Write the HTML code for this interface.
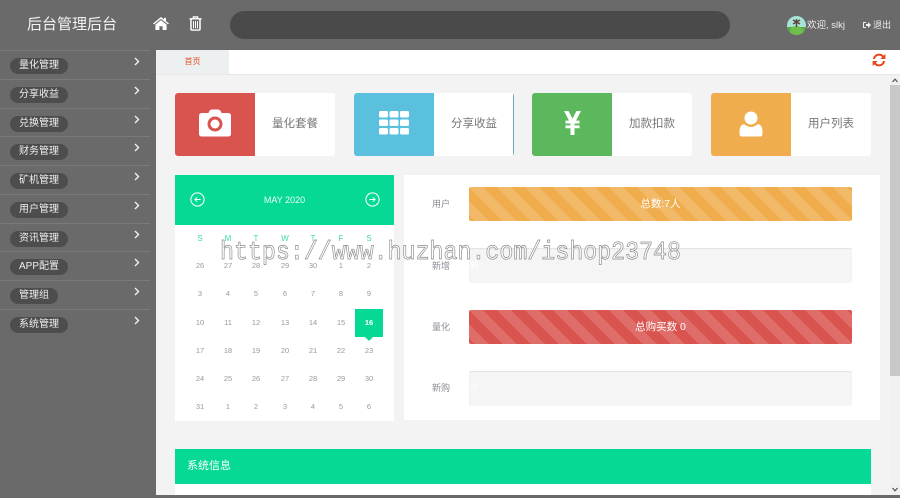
<!DOCTYPE html>
<html lang="zh"><head><meta charset="utf-8"><style>
*{box-sizing:border-box}
html,body{margin:0;padding:0;width:900px;height:498px;overflow:hidden;background:#f3f3f3;font-family:"Liberation Sans","Noto Sans CJK SC",sans-serif}
.a{position:absolute}
.item{position:absolute;left:0;width:150px;height:29px;border-top:1px solid #7a7a7a}
.pill{position:absolute;left:10px;top:7px;height:16px;line-height:16px;background:#4d4d4d;border-radius:8px;color:#eee;font-size:10px;padding:0 9px;white-space:nowrap}
.chev{position:absolute;left:134px;top:6px}
.card{position:absolute;top:93px;width:160px;height:63px;background:#fff;border-radius:3px;overflow:hidden}
.card .ic{position:absolute;left:0;top:0;width:80px;height:63px}
.card .t{position:absolute;left:80px;right:0;top:0;line-height:63px;text-align:center;font-size:11.5px;color:#777}
.cal{position:absolute;font-size:7.5px;color:#999;width:28px;text-align:center;line-height:10px}
.lab{position:absolute;left:432px;font-size:9px;color:#8b8b96;line-height:12px}
.bar{position:absolute;left:469px;width:383px;height:34px;border-radius:2px;text-align:center;line-height:34px;color:#fff;font-size:10.5px}
</style></head><body>
<div class="a" style="left:0;top:0;width:900px;height:50px;background:#6a6a6a"></div>
<div class="a" style="left:0;top:50px;width:156px;height:448px;background:#6a6a6a"></div>
<div class="a" style="left:0;top:495px;width:900px;height:3px;background:#6a6a6a"></div>
<div class="a" style="left:27px;top:14px;font-size:15px;line-height:22px;color:#f2f2f2;white-space:nowrap">后台管理后台</div>
<svg class="a" style="left:153px;top:17px" width="16" height="13" viewBox="0 0 16 14" preserveAspectRatio="none"><path fill="#fff" d="M8 0 L11 2.6 V1 H13 V4.4 L16 7 L15 8 L8 2 L1 8 L0 7 Z M8 3.4 L13.6 8.2 V14 H9.6 V10 H6.4 V14 H2.4 V8.2 Z"/></svg>
<svg class="a" style="left:189px;top:16px" width="13" height="15" viewBox="0 0 13 16" preserveAspectRatio="none"><path fill="none" stroke="#fff" stroke-width="1.5" d="M.5 3 H12.5 M2 3 V14 Q2 15 3 15 H10 Q11 15 11 14 V3 M4.5 3 V1 H8.5 V3"/><path stroke="#fff" stroke-width="1" d="M4.5 5.5 V13 M6.5 5.5 V13 M8.5 5.5 V13"/></svg>
<div class="a" style="left:230px;top:11px;width:500px;height:28px;border-radius:14px;background:#4a4a4a"></div>
<svg class="a" style="left:787px;top:16px" width="19" height="19" viewBox="0 0 19 19"><defs><clipPath id="c"><circle cx="9.5" cy="9.5" r="9.5"/></clipPath></defs><g clip-path="url(#c)"><rect width="19" height="19" fill="#a8e3d8"/><rect y="11" width="19" height="8" fill="#58a84a"/><path d="M3 13 Q9 7 16 13 V19 H3Z" fill="#6fbd4a"/><path d="M9.5 3 V11 M6 4 L13 8 M13 4 L6 8" stroke="#5a4436" stroke-width="1.4"/></g></svg>
<div class="a" style="left:807px;top:19px;font-size:9.5px;line-height:13px;color:#eee;white-space:nowrap">欢迎, slkj</div>
<svg class="a" style="left:863px;top:21px" width="8" height="8" viewBox="0 0 8 8"><path fill="#eee" d="M0 1 H3 V2 H1 V6 H3 V7 H0 Z M3 3 H5 V1 L8 4 L5 7 V5 H3 Z"/></svg>
<div class="a" style="left:873px;top:19px;font-size:9px;line-height:13px;color:#eee;white-space:nowrap">退出</div>

<div class="item" style="top:50px"><span class="pill">量化管理</span><svg class="chev" width="6" height="9"><path d="M1 1 L4.5 4.5 L1 8" fill="none" stroke="#f0f0f0" stroke-width="1.4"/></svg></div>
<div class="item" style="top:79px"><span class="pill">分享收益</span><svg class="chev" width="6" height="9"><path d="M1 1 L4.5 4.5 L1 8" fill="none" stroke="#f0f0f0" stroke-width="1.4"/></svg></div>
<div class="item" style="top:108px"><span class="pill">兑换管理</span><svg class="chev" width="6" height="9"><path d="M1 1 L4.5 4.5 L1 8" fill="none" stroke="#f0f0f0" stroke-width="1.4"/></svg></div>
<div class="item" style="top:136px"><span class="pill">财务管理</span><svg class="chev" width="6" height="9"><path d="M1 1 L4.5 4.5 L1 8" fill="none" stroke="#f0f0f0" stroke-width="1.4"/></svg></div>
<div class="item" style="top:165px"><span class="pill">矿机管理</span><svg class="chev" width="6" height="9"><path d="M1 1 L4.5 4.5 L1 8" fill="none" stroke="#f0f0f0" stroke-width="1.4"/></svg></div>
<div class="item" style="top:194px"><span class="pill">用户管理</span><svg class="chev" width="6" height="9"><path d="M1 1 L4.5 4.5 L1 8" fill="none" stroke="#f0f0f0" stroke-width="1.4"/></svg></div>
<div class="item" style="top:223px"><span class="pill">资讯管理</span><svg class="chev" width="6" height="9"><path d="M1 1 L4.5 4.5 L1 8" fill="none" stroke="#f0f0f0" stroke-width="1.4"/></svg></div>
<div class="item" style="top:251px"><span class="pill">APP配置</span><svg class="chev" width="6" height="9"><path d="M1 1 L4.5 4.5 L1 8" fill="none" stroke="#f0f0f0" stroke-width="1.4"/></svg></div>
<div class="item" style="top:280px"><span class="pill">管理组</span><svg class="chev" width="6" height="9"><path d="M1 1 L4.5 4.5 L1 8" fill="none" stroke="#f0f0f0" stroke-width="1.4"/></svg></div>
<div class="item" style="top:309px"><span class="pill">系统管理</span><svg class="chev" width="6" height="9"><path d="M1 1 L4.5 4.5 L1 8" fill="none" stroke="#f0f0f0" stroke-width="1.4"/></svg></div>

<div class="a" style="left:156px;top:50px;width:744px;height:25px;background:#fff;border-bottom:1px solid #e8e8e8"></div>
<div class="a" style="left:156px;top:50px;width:73px;height:24px;background:#ecf0f1;text-align:center;font-size:8px;line-height:24px;color:#e2532d">首页</div>
<svg class="a" style="left:872px;top:53px" width="14" height="14" viewBox="0 0 14 14"><path fill="#e8481c" d="M7 0.6 C9 0.6 10.6 1.4 11.6 2.6 L13.4 1 V6 H8.4 L10.2 4.2 C9.4 3.2 8.3 2.6 7 2.6 C5 2.6 3.4 4 3 6 H0.9 C1.3 3 3.9 0.6 7 0.6 Z M0.6 8 H5.6 L3.8 9.8 C4.6 10.8 5.7 11.4 7 11.4 C9 11.4 10.6 10 11 8 H13.1 C12.7 11 10.1 13.4 7 13.4 C5 13.4 3.4 12.6 2.4 11.4 L0.6 13 Z"/></svg>

<div class="a" style="left:890px;top:75px;width:10px;height:420px;background:#f1f1f1"></div>
<div class="a" style="left:890px;top:85px;width:10px;height:291px;background:#c8c8c8"></div>
<svg class="a" style="left:892px;top:78px" width="6" height="5"><path d="M.5 4 L3 1.2 L5.5 4" fill="none" stroke="#555" stroke-width="1.2"/></svg>
<svg class="a" style="left:892px;top:487px" width="6" height="5"><path d="M.5 1 L3 3.8 L5.5 1" fill="none" stroke="#555" stroke-width="1.2"/></svg>

<div class="card" style="left:175px"><div class="ic" style="background:#d9534f"></div><div class="t">量化套餐</div>
<svg class="a" style="left:24px;top:16px" width="32" height="28" viewBox="0 0 32 28"><path fill="#fff" fill-rule="evenodd" d="M3 4 H9.5 Q10.5 .5 13 .5 H19 Q21.5 .5 22.5 4 H29 Q32 4 32 7 V25 Q32 27.5 29 27.5 H3 Q0 27.5 0 25 V7 Q0 4 3 4 Z M16 7.5 A7.5 7.5 0 1 0 16.01 22.5 A7.5 7.5 0 1 0 16 7.5 Z M16 10.5 A4.5 4.5 0 1 1 15.99 19.5 A4.5 4.5 0 1 1 16 10.5 Z"/></svg></div>
<div class="card" style="left:354px"><div class="ic" style="background:#5bc0de"></div><div class="t">分享收益</div><div class="a" style="right:0;top:0;width:1px;height:63px;background:#6aa9bd"></div>
<svg class="a" style="left:25px;top:18px" width="30" height="24" viewBox="0 0 30 24"><g fill="#fff"><rect width="9" height="6.5" rx="1.5"/><rect x="10.5" width="9" height="6.5" rx="1.5"/><rect x="21" width="9" height="6.5" rx="1.5"/><rect y="8.5" width="9" height="6.5" rx="1.5"/><rect x="10.5" y="8.5" width="9" height="6.5" rx="1.5"/><rect x="21" y="8.5" width="9" height="6.5" rx="1.5"/><rect y="17" width="9" height="6.5" rx="1.5"/><rect x="10.5" y="17" width="9" height="6.5" rx="1.5"/><rect x="21" y="17" width="9" height="6.5" rx="1.5"/></g></svg></div>
<div class="card" style="left:532px;width:160px"><div class="ic" style="background:#5cb85c"></div><div class="t">加款扣款</div>
<svg class="a" style="left:32px;top:18px" width="17" height="24" viewBox="0 0 17 25" preserveAspectRatio="none"><path fill="#fff" d="M0 0 H4.5 L8.5 8 L12.5 0 H17 L12 10 H15.5 V13 H10.5 V15 H15.5 V18 H10.5 V25 H6.5 V18 H1.5 V15 H6.5 V13 H1.5 V10 H5 Z"/></svg></div>
<div class="card" style="left:711px"><div class="ic" style="background:#f0ad4e"></div><div class="t">用户列表</div>
<svg class="a" style="left:28px;top:18px" width="24" height="26" viewBox="0 0 24 26"><circle cx="12" cy="7" r="6.5" fill="#fff"/><path fill="#fff" d="M5 13 Q8.5 16 12 16 Q15.5 16 19 13 Q23.5 14 23.5 21 V23 Q23.5 25.5 21 25.5 H3 Q.5 25.5 .5 23 V21 Q.5 14 5 13 Z"/></svg></div>

<div class="a" style="left:175px;top:175px;width:219px;height:246px;background:#fff"></div>
<div class="a" style="left:175px;top:175px;width:219px;height:50px;background:#06d995;text-align:center;color:#eafff7;font-size:9px;line-height:50px">MAY 2020</div>
<svg class="a" style="left:190px;top:192px" width="15" height="15" viewBox="0 0 17 17"><circle cx="8.5" cy="8.5" r="7.5" fill="none" stroke="#fff" stroke-width="1.2"/><path d="M12 8.5 H5.5 M8 6 L5.5 8.5 L8 11" fill="none" stroke="#fff"/></svg>
<svg class="a" style="left:365px;top:192px" width="15" height="15" viewBox="0 0 17 17"><circle cx="8.5" cy="8.5" r="7.5" fill="none" stroke="#fff" stroke-width="1.2"/><path d="M5 8.5 H11.5 M9 6 L11.5 8.5 L9 11" fill="none" stroke="#fff"/></svg>

<div class="cal" style="left:186px;top:234px;color:#3fdcaa;font-size:8px">S</div><div class="cal" style="left:214px;top:234px;color:#3fdcaa;font-size:8px">M</div><div class="cal" style="left:242px;top:234px;color:#3fdcaa;font-size:8px">T</div><div class="cal" style="left:271px;top:234px;color:#3fdcaa;font-size:8px">W</div><div class="cal" style="left:299px;top:234px;color:#3fdcaa;font-size:8px">T</div><div class="cal" style="left:327px;top:234px;color:#3fdcaa;font-size:8px">F</div><div class="cal" style="left:355px;top:234px;color:#3fdcaa;font-size:8px">S</div>

<div class="cal" style="left:186px;top:261px">26</div><div class="cal" style="left:214px;top:261px">27</div><div class="cal" style="left:242px;top:261px">28</div><div class="cal" style="left:271px;top:261px">29</div><div class="cal" style="left:299px;top:261px">30</div><div class="cal" style="left:327px;top:261px">1</div><div class="cal" style="left:355px;top:261px">2</div>
<div class="cal" style="left:186px;top:289px">3</div><div class="cal" style="left:214px;top:289px">4</div><div class="cal" style="left:242px;top:289px">5</div><div class="cal" style="left:271px;top:289px">6</div><div class="cal" style="left:299px;top:289px">7</div><div class="cal" style="left:327px;top:289px">8</div><div class="cal" style="left:355px;top:289px">9</div>
<div class="cal" style="left:186px;top:318px">10</div><div class="cal" style="left:214px;top:318px">11</div><div class="cal" style="left:242px;top:318px">12</div><div class="cal" style="left:271px;top:318px">13</div><div class="cal" style="left:299px;top:318px">14</div><div class="cal" style="left:327px;top:318px">15</div>
<div class="a" style="left:355px;top:309px;width:28px;height:28px;background:#06d995"></div>
<div class="a" style="left:365px;top:337px;width:0;height:0;border-left:4px solid transparent;border-right:4px solid transparent;border-top:4px solid #06d995"></div>
<div class="cal" style="left:355px;top:318px;color:#fff;font-weight:bold">16</div>
<div class="cal" style="left:186px;top:346px">17</div><div class="cal" style="left:214px;top:346px">18</div><div class="cal" style="left:242px;top:346px">19</div><div class="cal" style="left:271px;top:346px">20</div><div class="cal" style="left:299px;top:346px">21</div><div class="cal" style="left:327px;top:346px">22</div><div class="cal" style="left:355px;top:346px">23</div>
<div class="cal" style="left:186px;top:374px">24</div><div class="cal" style="left:214px;top:374px">25</div><div class="cal" style="left:242px;top:374px">26</div><div class="cal" style="left:271px;top:374px">27</div><div class="cal" style="left:299px;top:374px">28</div><div class="cal" style="left:327px;top:374px">29</div><div class="cal" style="left:355px;top:374px">30</div>
<div class="cal" style="left:186px;top:402px">31</div><div class="cal" style="left:214px;top:402px">1</div><div class="cal" style="left:242px;top:402px">2</div><div class="cal" style="left:271px;top:402px">3</div><div class="cal" style="left:299px;top:402px">4</div><div class="cal" style="left:327px;top:402px">5</div><div class="cal" style="left:355px;top:402px">6</div>

<div class="a" style="left:404px;top:175px;width:476px;height:245px;background:#fff"></div>
<div class="lab" style="top:198px">用户</div>
<div class="bar" style="top:187px;background-color:#f0ad4e;background-image:linear-gradient(45deg,rgba(255,255,255,.15) 25%,transparent 25%,transparent 50%,rgba(255,255,255,.15) 50%,rgba(255,255,255,.15) 75%,transparent 75%);background-size:28px 28px">总数:7人</div>
<div class="lab" style="top:260px">新增</div>
<div class="a" style="left:469px;top:248px;width:383px;height:35px;background:#f5f5f5;border-radius:2px;box-shadow:inset 0 1px 1px rgba(0,0,0,.08)"></div>
<div class="a" style="left:470px;top:260px;font-size:9px;line-height:12px;color:#fff">新</div>
<div class="lab" style="top:321px">量化</div>
<div class="bar" style="top:310px;background-color:#d9534f;background-image:linear-gradient(45deg,rgba(255,255,255,.15) 25%,transparent 25%,transparent 50%,rgba(255,255,255,.15) 50%,rgba(255,255,255,.15) 75%,transparent 75%);background-size:28px 28px">总购买数 0</div>
<div class="lab" style="top:382px">新购</div>
<div class="a" style="left:469px;top:371px;width:383px;height:35px;background:#f5f5f5;border-radius:2px;box-shadow:inset 0 1px 1px rgba(0,0,0,.08)"></div>
<div class="a" style="left:470px;top:382px;font-size:9px;line-height:12px;color:#fff">今</div>

<div class="a" style="left:175px;top:449px;width:696px;height:35px;background:#06d995;color:#fff;font-size:11px;line-height:35px;padding-left:12px">系统信息</div>
<div class="a" style="left:175px;top:484px;width:696px;height:11px;background:#fff"></div>

<svg class="a" style="left:0;top:0" width="900" height="498"><text x="220" y="259" font-family="Liberation Mono, monospace" font-size="26" textLength="461" lengthAdjust="spacingAndGlyphs" fill="#fff" fill-opacity=".75" stroke="#8a8a8a" stroke-width=".7">https://www.huzhan.com/ishop23748</text></svg>
</body></html>
